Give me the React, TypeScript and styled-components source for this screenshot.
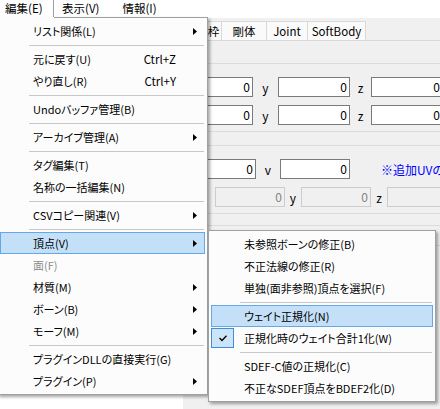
import React from "react";
import styled, { createGlobalStyle, css } from "styled-components";

const GlobalStyle = createGlobalStyle`
  html, body { margin: 0; padding: 0; }
  body {
    font-family: "Noto Sans CJK JP", "Noto Sans", sans-serif;
    font-size: 11px;
    font-weight: 400;
    color: #000;
    font-feature-settings: "palt";
  }
`;

const Window = styled.div`
  position: relative;
  width: 440px;
  height: 409px;
  overflow: hidden;
  background: #f0f0f0;
  display: flex;
  flex-direction: column;
`;

const MenuBar = styled.div`
  height: 18px;
  flex-shrink: 0;
  background: #fff;
  display: flex;
  align-items: stretch;
  font-size: 11.5px;
`;

const MenuBarItem = styled.div<{ $open?: boolean }>`
  display: flex;
  align-items: center;
  padding: 0 15px 0 8px;
  white-space: nowrap;
  line-height: 1;
  ${(p) =>
    p.$open &&
    css`
      box-sizing: border-box;
      width: 54px;
      padding-left: 5px;
      border-right: 1px solid #a0a0a0;
    `}
`;

const Body = styled.div`
  flex: 1;
  min-height: 0;
  display: flex;
`;

const ListPane = styled.div`
  width: 183px;
  flex-shrink: 0;
  background: #fff;
`;

const MainArea = styled.div`
  flex: 1;
  min-width: 0;
  display: flex;
  flex-direction: column;
  padding-top: 3px;
`;

const TabStrip = styled.div`
  height: 19px;
  flex-shrink: 0;
  display: flex;
`;

const Tab = styled.div<{ $w: number }>`
  width: ${(p) => p.$w}px;
  box-sizing: border-box;
  flex-shrink: 0;
  border: 1px solid #d9d9d9;
  border-bottom: none;
  margin-left: -1px;
  background: #fafafa;
  display: flex;
  align-items: center;
  justify-content: center;
  white-space: nowrap;
  overflow: hidden;
  font-size: 11.5px;
`;

const TabPage = styled.div`
  flex: 1;
  border-top: 1px solid #d9d9d9;
  padding: 22px 0 0 3px;
  display: flex;
  flex-direction: column;
`;

const Group = styled.div<{ $mt?: number }>`
  margin-top: ${(p) => p.$mt ?? 0}px;
  margin-right: -80px;
  border: 1px solid #dcdcdc;
  padding: 13px 0 6px 4px;
  display: flex;
  flex-direction: column;
  gap: 8px;
  flex-shrink: 0;
`;

const FieldRow = styled.div`
  height: 20px;
  display: flex;
  align-items: center;
  white-space: nowrap;
  font-size: 12px;
`;

const TextBox = styled.div<{ $w: number; $disabled?: boolean }>`
  width: ${(p) => p.$w}px;
  height: 20px;
  flex-shrink: 0;
  box-sizing: border-box;
  border: 1px solid ${(p) => (p.$disabled ? "#cccccc" : "#7a7a7a")};
  background: ${(p) => (p.$disabled ? "#f0f0f0" : "#fff")};
  color: ${(p) => (p.$disabled ? "#838383" : "#000")};
  text-align: right;
  padding-right: 2px;
  line-height: 18px;
`;

const AxisLabel = styled.div<{ $w: number }>`
  width: ${(p) => p.$w}px;
  flex-shrink: 0;
  text-align: center;
`;

const Note = styled.div<{ $ml: number }>`
  margin-left: ${(p) => p.$ml}px;
  color: #0000ff;
  white-space: nowrap;
`;

const PopupMenu = styled.div<{ $left: number; $top: number; $w: number; $joinTab?: boolean }>`
  position: absolute;
  left: ${(p) => p.$left}px;
  top: ${(p) => p.$top}px;
  width: ${(p) => p.$w}px;
  box-sizing: border-box;
  background: #fcfcfc;
  border: 1px solid #a0a0a0;
  padding: 2px;
  box-shadow: 2px 2px 3px rgba(0, 0, 0, 0.35);
  z-index: 10;
  ${(p) =>
    p.$joinTab &&
    css`
      border-top-color: transparent;
      &::before {
        content: "";
        position: absolute;
        top: -1px;
        left: 56px;
        right: -1px;
        height: 1px;
        background: #a0a0a0;
      }
    `}
`;

const MenuItem = styled.div<{ $active?: boolean; $disabled?: boolean; $sub?: boolean }>`
  display: grid;
  grid-template-columns: ${(p) => (p.$sub ? "32px 1fr" : "32px 1fr auto 28px")};
  align-items: center;
  height: 22px;
  box-sizing: border-box;
  border: 1px solid transparent;
  white-space: nowrap;
  color: ${(p) => (p.$disabled ? "#8c8c8c" : "#000")};
  ${(p) =>
    p.$active &&
    css`
      background: #c4e0f8;
      border-color: #66a8e6;
    `}
`;

const Gutter = styled.div`
  height: 100%;
  display: flex;
  align-items: center;
`;

const CheckBox = styled.div`
  margin-left: -1px;
  width: 23px;
  height: 20px;
  box-sizing: border-box;
  background: #cce4f7;
  border: 1px solid #3d8ee0;
  display: flex;
  align-items: center;
  justify-content: center;
`;

const Shortcut = styled.span`
  font-size: 11.5px;
`;

const ArrowCell = styled.div`
  padding-left: 17px;
  display: flex;
  align-items: center;
`;

const Separator = styled.div`
  height: 6px;
  margin: 0 1px 0 29px;
  display: flex;
  align-items: center;
  &::after {
    content: "";
    flex: 1;
    height: 1px;
    background: #c8c8c8;
  }
`;

const Arrow = () => (
  <svg width="4" height="7" viewBox="0 0 4 7">
    <polygon points="0,0 4,3.5 0,7" fill="#000" />
  </svg>
);

const Check = () => (
  <svg width="8" height="7" viewBox="0 0 8 7">
    <polyline points="0.5,3 3,5.5 7.5,0.8" fill="none" stroke="#000" strokeWidth="1.3" />
  </svg>
);

type Entry =
  | { sep: true }
  | { label: string; shortcut?: string; sub?: boolean; active?: boolean; disabled?: boolean; checked?: boolean; sep?: false };

const mainItems: Entry[] = [
  { label: "リスト関係(L)", sub: true },
  { sep: true },
  { label: "元に戻す(U)", shortcut: "Ctrl+Z" },
  { label: "やり直し(R)", shortcut: "Ctrl+Y" },
  { sep: true },
  { label: "Undoバッファ管理(B)" },
  { sep: true },
  { label: "アーカイブ管理(A)", sub: true },
  { sep: true },
  { label: "タグ編集(T)" },
  { label: "名称の一括編集(N)" },
  { sep: true },
  { label: "CSVコピー関連(V)", sub: true },
  { sep: true },
  { label: "頂点(V)", sub: true, active: true },
  { label: "面(F)", disabled: true },
  { label: "材質(M)", sub: true },
  { label: "ボーン(B)", sub: true },
  { label: "モーフ(M)", sub: true },
  { sep: true },
  { label: "プラグインDLLの直接実行(G)" },
  { label: "プラグイン(P)", sub: true },
];

const vertexItems: Entry[] = [
  { label: "未参照ボーンの修正(B)" },
  { label: "不正法線の修正(R)" },
  { label: "単独(面非参照)頂点を選択(F)" },
  { sep: true },
  { label: "ウェイト正規化(N)", active: true },
  { label: "正規化時のウェイト合計1化(W)", checked: true },
  { sep: true },
  { label: "SDEF-C値の正規化(C)" },
  { label: "不正なSDEF頂点をBDEF2化(D)" },
];

const MenuList = ({ items, submenu }: { items: Entry[]; submenu?: boolean }) => (
  <>
    {items.map((it, i) =>
      it.sep ? (
        <Separator key={i} />
      ) : (
        <MenuItem key={i} $active={it.active} $disabled={it.disabled} $sub={submenu}>
          <Gutter>
            {it.checked && (
              <CheckBox>
                <Check />
              </CheckBox>
            )}
          </Gutter>
          <span>{it.label}</span>
          {!submenu && <Shortcut>{it.shortcut ?? ""}</Shortcut>}
          {!submenu && <ArrowCell>{it.sub && <Arrow />}</ArrowCell>}
        </MenuItem>
      )
    )}
  </>
);

export default function App() {
  return (
    <>
      <GlobalStyle />
      <Window>
        <MenuBar>
          <MenuBarItem $open>編集(E)</MenuBarItem>
          <MenuBarItem>表示(V)</MenuBarItem>
          <MenuBarItem>情報(I)</MenuBarItem>
        </MenuBar>
        <Body>
          <ListPane />
          <MainArea>
            <TabStrip>
              <Tab $w={40}>表示枠</Tab>
              <Tab $w={46}>剛体</Tab>
              <Tab $w={42}>Joint</Tab>
              <Tab $w={59}>SoftBody</Tab>
            </TabStrip>
            <TabPage>
              <Group>
                <FieldRow>
                  <TextBox $w={62}>0</TextBox>
                  <AxisLabel $w={25}>y</AxisLabel>
                  <TextBox $w={72}>0</TextBox>
                  <AxisLabel $w={21}>z</AxisLabel>
                  <TextBox $w={72}>0</TextBox>
                </FieldRow>
                <FieldRow>
                  <TextBox $w={62}>0</TextBox>
                  <AxisLabel $w={25}>y</AxisLabel>
                  <TextBox $w={72}>0</TextBox>
                  <AxisLabel $w={21}>z</AxisLabel>
                  <TextBox $w={72}>0</TextBox>
                </FieldRow>
              </Group>
              <Group $mt={13}>
                <FieldRow>
                  <TextBox $w={65}>0</TextBox>
                  <AxisLabel $w={24}>v</AxisLabel>
                  <TextBox $w={70}>0</TextBox>
                  <Note $ml={31}>※追加UVの有効数</Note>
                </FieldRow>
                <FieldRow>
                  <AxisLabel $w={24}>x</AxisLabel>
                  <TextBox $w={70} $disabled>0</TextBox>
                  <AxisLabel $w={16}>y</AxisLabel>
                  <TextBox $w={70} $disabled>0</TextBox>
                  <AxisLabel $w={16}>z</AxisLabel>
                  <TextBox $w={70} $disabled>0</TextBox>
                </FieldRow>
              </Group>
              <Group $mt={11} />
            </TabPage>
          </MainArea>
        </Body>

        <PopupMenu $left={-3} $top={17} $w={211} $joinTab>
          <MenuList items={mainItems} />
        </PopupMenu>
        <PopupMenu $left={208} $top={230} $w={228}>
          <MenuList items={vertexItems} submenu />
        </PopupMenu>
      </Window>
    </>
  );
}
